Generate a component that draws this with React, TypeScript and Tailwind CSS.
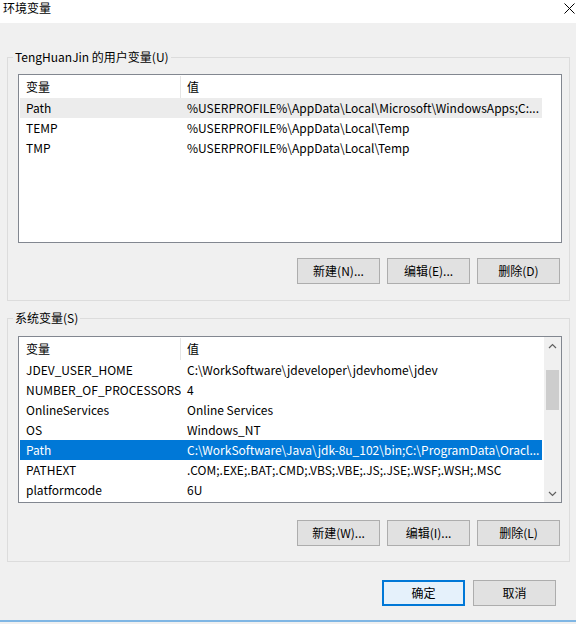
import React from "react";

interface Row {
  name: string;
  value: string;
  state?: "hover" | "selected";
}

const userVars: Row[] = [
  { name: "Path", value: "%USERPROFILE%\\AppData\\Local\\Microsoft\\WindowsApps;C:...", state: "hover" },
  { name: "TEMP", value: "%USERPROFILE%\\AppData\\Local\\Temp" },
  { name: "TMP", value: "%USERPROFILE%\\AppData\\Local\\Temp" },
];

const systemVars: Row[] = [
  { name: "JDEV_USER_HOME", value: "C:\\WorkSoftware\\jdeveloper\\jdevhome\\jdev" },
  { name: "NUMBER_OF_PROCESSORS", value: "4" },
  { name: "OnlineServices", value: "Online Services" },
  { name: "OS", value: "Windows_NT" },
  { name: "Path", value: "C:\\WorkSoftware\\Java\\jdk-8u_102\\bin;C:\\ProgramData\\Oracl...", state: "selected" },
  { name: "PATHEXT", value: ".COM;.EXE;.BAT;.CMD;.VBS;.VBE;.JS;.JSE;.WSF;.WSH;.MSC" },
  { name: "platformcode", value: "6U" },
];

const Button = ({ label, primary }: { label: string; primary?: boolean }) => (
  <button
    className={`w-[83px] h-[26px] text-[12px] text-black flex items-center justify-center ${
      primary ? "border-2 border-[#0078d7] bg-[#e5f1fb]" : "border border-[#adadad] bg-[#e1e1e1]"
    }`}
  >
    {label}
  </button>
);

const ListView = ({ rows, height, scroll }: { rows: Row[]; height: string; scroll?: boolean }) => (
  <div className={`w-[544px] ${height} border border-[#828790] bg-white flex overflow-hidden`}>
    <div className="flex-1 pl-px pt-px">
      {/* header */}
      <div className="h-[22px] flex items-center text-[12px]">
        <div className="w-[161px] h-full flex items-center pl-[6px] border-r border-[#e5e5e5]">变量</div>
        <div className="pl-[6px]">值</div>
      </div>
      {rows.map((r) => (
        <div
          key={r.name}
          className={`h-[20px] w-[522px] flex items-center text-[12px] ${
            r.state === "selected" ? "bg-[#0078d7] text-white" : r.state === "hover" ? "bg-[#ececec] text-black" : "text-black"
          }`}
        >
          <div className="w-[161px] pl-[6px] whitespace-nowrap overflow-hidden">{r.name}</div>
          <div className="flex-1 pl-[6px] whitespace-nowrap overflow-hidden">{r.value}</div>
        </div>
      ))}
    </div>
    {scroll && (
      <div className="w-[17px] bg-[#f0f0f0] flex flex-col items-center">
        <div className="h-[17px] w-full flex items-center justify-center">
          <svg width="9" height="6" viewBox="0 0 9 6">
            <polyline points="1,5 4.5,1.5 8,5" fill="none" stroke="#606060" strokeWidth="1.2" />
          </svg>
        </div>
        <div className="mt-[16px] w-[13px] h-[40px] bg-[#cdcdcd]" />
        <div className="flex-1" />
        <div className="h-[17px] w-full flex items-center justify-center">
          <svg width="9" height="6" viewBox="0 0 9 6">
            <polyline points="1,1 4.5,4.5 8,1" fill="none" stroke="#606060" strokeWidth="1.2" />
          </svg>
        </div>
      </div>
    )}
  </div>
);

export default function App() {
  return (
    <div
      className="w-[576px] h-[624px] bg-[#f0f0f0] flex flex-col overflow-hidden text-black"
      style={{ fontFamily: '"Noto Sans CJK SC", "Noto Sans", sans-serif' }}
    >
      {/* title bar */}
      <div className="h-[23px] bg-white flex justify-between pl-[3px] pr-[1px]">
        <span className="text-[12px] leading-[16px]">环境变量</span>
        <svg width="11" height="11" viewBox="0 0 11 11" className="mt-[3px]">
          <path d="M0.5 0.5 L10.5 10.5 M10.5 0.5 L0.5 10.5" stroke="#000" strokeWidth="1" />
        </svg>
      </div>

      {/* user variables */}
      <div className="relative mt-[34px] ml-[7px] w-[563px] border border-[#dcdcdc] pl-[10px] pt-[16px] pb-[16px]">
        <span className="absolute -top-[9px] left-[5px] px-[2px] bg-[#f0f0f0] text-[12px] leading-[16px]">
          TengHuanJin 的用户变量(U)
        </span>
        <ListView rows={userVars} height="h-[169px]" />
        <div className="mt-[15px] w-[544px] flex justify-end gap-[7px] pr-[2px]">
          <Button label="新建(N)..." />
          <Button label="编辑(E)..." />
          <Button label="删除(D)" />
        </div>
      </div>

      {/* system variables */}
      <div className="relative mt-[17px] ml-[7px] w-[563px] border border-[#dcdcdc] pl-[10px] pt-[17px] pb-[15px]">
        <span className="absolute -top-[9px] left-[5px] px-[2px] bg-[#f0f0f0] text-[12px] leading-[16px]">
          系统变量(S)
        </span>
        <ListView rows={systemVars} height="h-[167px]" scroll />
        <div className="mt-[17px] w-[544px] flex justify-end gap-[7px] pr-[2px]">
          <Button label="新建(W)..." />
          <Button label="编辑(I)..." />
          <Button label="删除(L)" />
        </div>
      </div>

      {/* dialog buttons */}
      <div className="mt-[18px] w-[556px] flex justify-end gap-[8px]">
        <Button label="确定" primary />
        <Button label="取消" />
      </div>

      <div className="flex-1" />
      <div className="h-[2px] bg-[#7fb6e4] mb-[2px]" />
    </div>
  );
}
